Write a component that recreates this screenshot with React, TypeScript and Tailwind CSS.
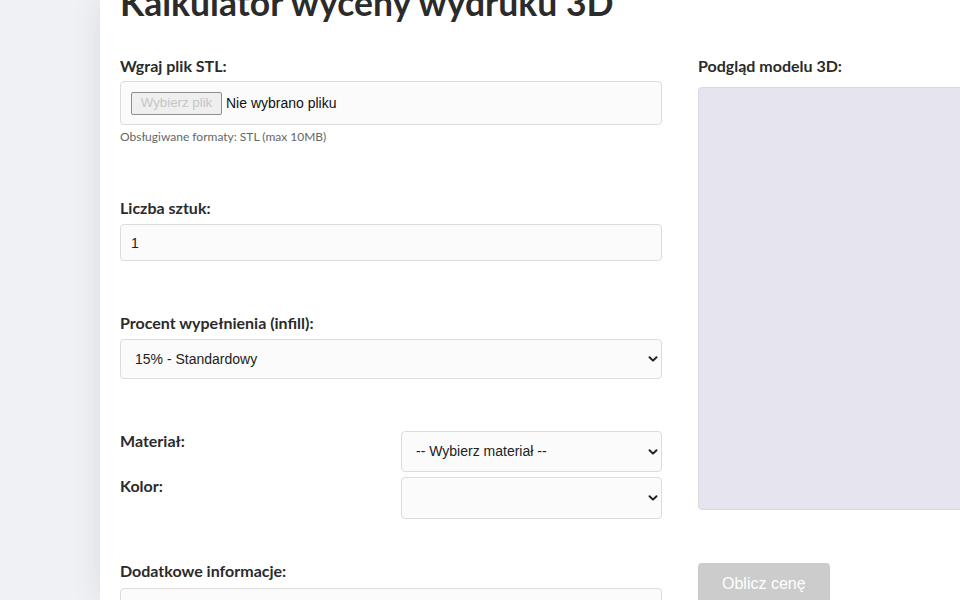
import React from 'react';

function Chevron() {
  return (
    <svg
      className="pointer-events-none absolute right-[4px] top-1/2 -translate-y-1/2"
      width="10"
      height="8"
      viewBox="0 0 10 8"
      fill="none"
    >
      <path d="M1.5 2.2 5 5.6 8.5 2.2" stroke="#222" strokeWidth="2" strokeLinecap="round" strokeLinejoin="round" />
    </svg>
  );
}

function Select({ value, className = '' }: { value: string; className?: string }) {
  return (
    <div className={`relative ${className}`}>
      <select
        defaultValue={value}
        className="h-full w-full appearance-none rounded-[4px] border border-[#dcdcdc] bg-[#fbfbfb] pl-[14px] pr-6 font-['Liberation_Sans',Arial,sans-serif] text-[14px] text-[#222] outline-none"
      >
        <option value={value}>{value}</option>
      </select>
      <Chevron />
    </div>
  );
}

const label = "block text-[16px] font-bold leading-5 text-[#2b2b2b]";

export default function App() {
  return (
    <div className="flex h-[600px] w-full overflow-hidden bg-[#eff1f4] font-['Lato',sans-serif]">
      <div className="ml-[100px] w-[1160px] shrink-0 bg-white pl-[20px] shadow-[0_0_28px_rgba(40,50,70,0.10)]">
        <h1 className="mt-[-18px] text-[35.5px] font-bold leading-[42px] text-[#2b2b2b]">
          Kalkulator wyceny wydruku 3D
        </h1>

        <div className="mt-[32px] flex gap-[36px]">
          {/* formularz */}
          <div className="w-[542px] shrink-0">
            <label className={label}>Wgraj plik STL:</label>
            <div className="mt-[5px] flex h-[44px] items-center rounded-[4px] border border-[#dcdcdc] bg-[#fbfbfb] pl-[10px] font-['Liberation_Sans',Arial,sans-serif] text-[14px] text-[#111]">
              <span className="flex h-[23px] w-[91px] items-center justify-center rounded-[2px] border border-[#8f8f8f] bg-[#efefef] text-[13.3px] text-[#c6c6c6]">
                Wybierz plik
              </span>
              <span className="ml-[4px]">Nie wybrano pliku</span>
            </div>
            <p className="mt-[4px] text-[12px] leading-4 text-[#666]">Obsługiwane formaty: STL (max 10MB)</p>

            <label className={`${label} mt-[53px]`}>Liczba sztuk:</label>
            <input
              type="number"
              defaultValue={1}
              className="mt-[6px] block h-[37px] w-full rounded-[4px] border border-[#dcdcdc] bg-[#fbfbfb] px-[10px] font-['Liberation_Sans',Arial,sans-serif] text-[14px] text-[#222] outline-none"
            />

            <label className={`${label} mt-[52px]`}>Procent wypełnienia (infill):</label>
            <Select value="15% - Standardowy" className="mt-[6px] h-[40px]" />

            <div className="mt-[52px] grid grid-cols-2 gap-x-[20px] gap-y-[5px]">
              <label className={label}>Materiał:</label>
              <Select value="-- Wybierz materiał --" className="h-[41px]" />
              <label className={`${label} mt-[-1px]`}>Kolor:</label>
              <Select value="" className="h-[42px]" />
            </div>

            <label className={`${label} mt-[42px]`}>Dodatkowe informacje:</label>
            <textarea className="mt-[7px] block h-[80px] w-full resize-none rounded-[4px] border border-[#dcdcdc] bg-[#fbfbfb]" />
          </div>

          {/* podgląd */}
          <div className="w-[542px] shrink-0">
            <label className={label}>Podgląd modelu 3D:</label>
            <div className="mt-[11px] h-[423px] rounded-[4px] border border-[#d9d9de] bg-[#e6e4ee]" />
            <button className="mt-[53px] rounded-[4px] bg-[#cccccc] px-[24px] pt-[9px] pb-[14px] font-['Liberation_Sans',Arial,sans-serif] text-[16px] text-white">
              Oblicz cenę
            </button>
          </div>
        </div>
      </div>
    </div>
  );
}
